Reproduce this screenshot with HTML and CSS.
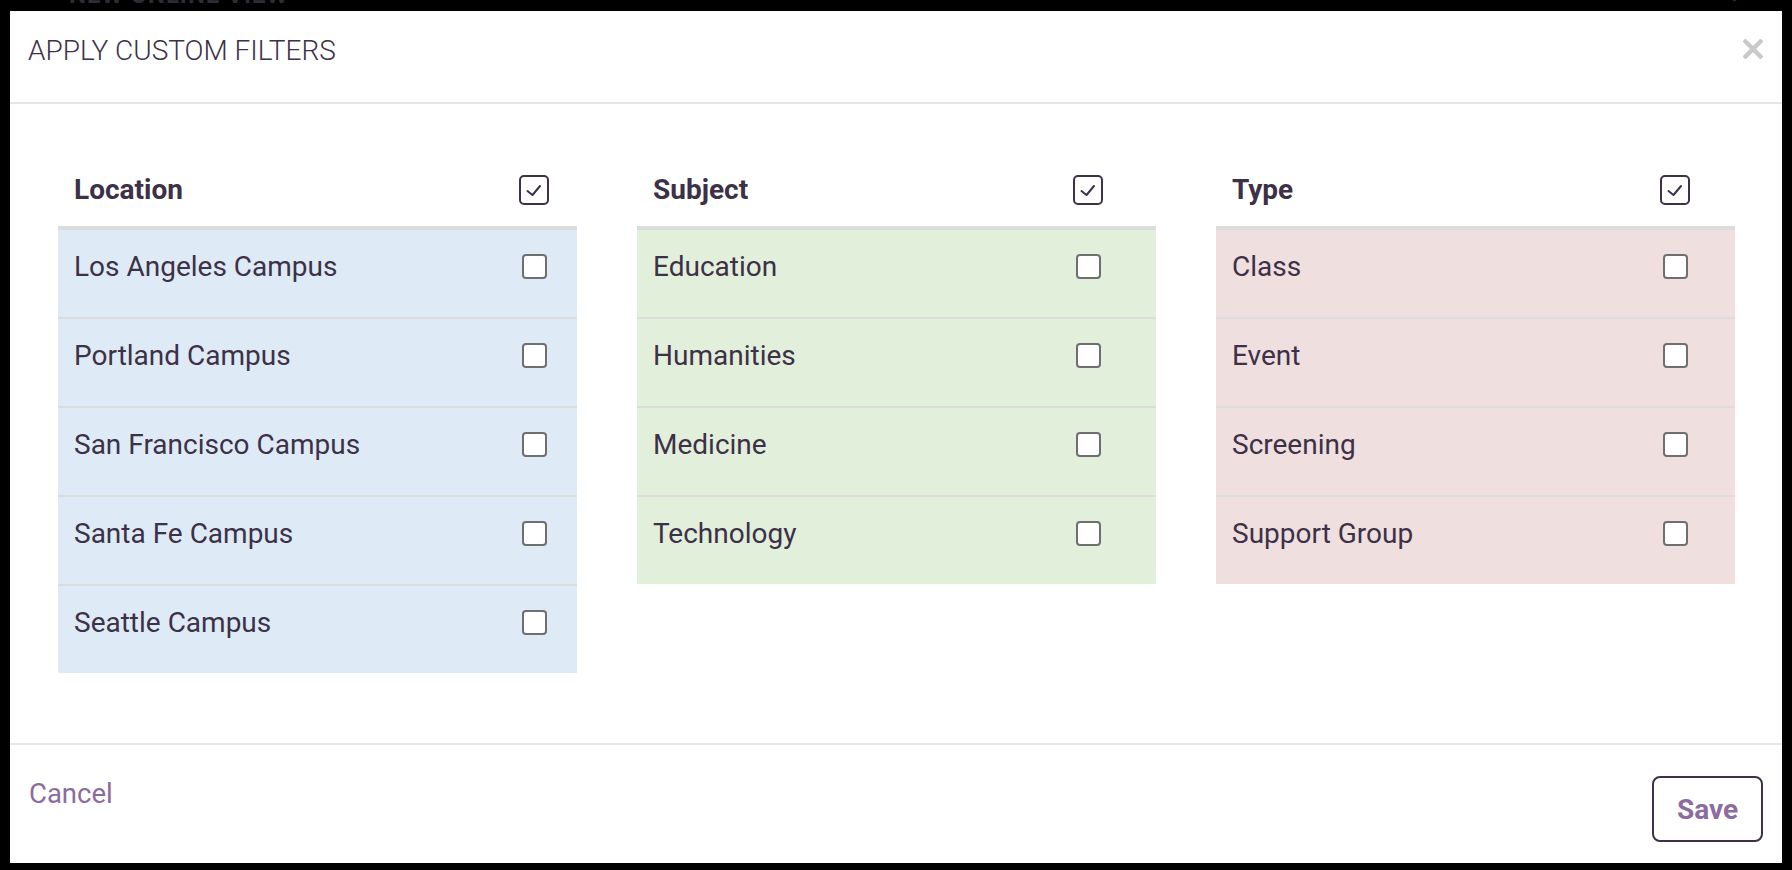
FILE: index.html
```
<!DOCTYPE html>
<html lang="en">
<head>
<meta charset="utf-8">
<title>Apply Custom Filters</title>
<link rel="stylesheet" href="styles.css">
</head>
<body>
<div class="behind">
  <span class="behind-text">NEW ONLINE VIEW</span>
  <span class="behind-text behind-right">+</span>
</div>
<div class="modal">
  <header class="modal-head">
    <h2 class="modal-title">APPLY CUSTOM FILTERS</h2>
    <button class="close" type="button" aria-label="Close">
      <svg width="20" height="20" viewBox="0 0 20 20"><path d="M2.5 2.5 L17.5 17.5 M17.5 2.5 L2.5 17.5" stroke="#c9c9c9" stroke-width="4.4" stroke-linecap="square" fill="none"/></svg>
    </button>
  </header>
  <div class="modal-body">
    <section class="col col-location">
      <div class="col-head"><span class="col-title">Location</span><span class="cb cb-head"><svg width="26" height="26" viewBox="0 0 26 26"><path d="M6.5 14 L11.5 18 L19 9" stroke="#3d3148" stroke-width="2" fill="none" stroke-linecap="round" stroke-linejoin="round"/></svg></span></div>
      <ul class="list">
        <li class="row"><span class="row-label">Los Angeles Campus</span><span class="cb"></span></li>
        <li class="row"><span class="row-label">Portland Campus</span><span class="cb"></span></li>
        <li class="row"><span class="row-label">San Francisco Campus</span><span class="cb"></span></li>
        <li class="row"><span class="row-label">Santa Fe Campus</span><span class="cb"></span></li>
        <li class="row"><span class="row-label">Seattle Campus</span><span class="cb"></span></li>
      </ul>
    </section>
    <section class="col col-subject">
      <div class="col-head"><span class="col-title">Subject</span><span class="cb cb-head"><svg width="26" height="26" viewBox="0 0 26 26"><path d="M6.5 14 L11.5 18 L19 9" stroke="#3d3148" stroke-width="2" fill="none" stroke-linecap="round" stroke-linejoin="round"/></svg></span></div>
      <ul class="list">
        <li class="row"><span class="row-label">Education</span><span class="cb"></span></li>
        <li class="row"><span class="row-label">Humanities</span><span class="cb"></span></li>
        <li class="row"><span class="row-label">Medicine</span><span class="cb"></span></li>
        <li class="row"><span class="row-label">Technology</span><span class="cb"></span></li>
      </ul>
    </section>
    <section class="col col-type">
      <div class="col-head"><span class="col-title">Type</span><span class="cb cb-head"><svg width="26" height="26" viewBox="0 0 26 26"><path d="M6.5 14 L11.5 18 L19 9" stroke="#3d3148" stroke-width="2" fill="none" stroke-linecap="round" stroke-linejoin="round"/></svg></span></div>
      <ul class="list">
        <li class="row"><span class="row-label">Class</span><span class="cb"></span></li>
        <li class="row"><span class="row-label">Event</span><span class="cb"></span></li>
        <li class="row"><span class="row-label">Screening</span><span class="cb"></span></li>
        <li class="row"><span class="row-label">Support Group</span><span class="cb"></span></li>
      </ul>
    </section>
  </div>
  <footer class="modal-foot">
    <a class="cancel" href="#">Cancel</a>
    <button class="save" type="button">Save</button>
  </footer>
</div>
</body>
</html>
```
FILE: styles.css
```
* { box-sizing: border-box; }
html, body { margin: 0; padding: 0; }
body {
  background: #000;
  font-family: Roboto, "Liberation Sans", Arial, sans-serif;
  color: #3d3148;
  height: 870px;
  overflow: hidden;
}
.behind {
  height: 11px;
  overflow: hidden;
  display: flex;
  justify-content: space-between;
  padding: 0 50px 0 69px;
}
.behind-text {
  font-size: 24px;
  line-height: 24px;
  font-weight: 700;
  color: #2e2c36;
  margin-top: -17px;
  letter-spacing: 1px;
}
.modal {
  margin: 0 10px;
  height: 852px;
  background: #fff;
  display: flex;
  flex-direction: column;
}
.modal-head {
  height: 93px;
  border-bottom: 2px solid #e6e6e6;
  display: flex;
  align-items: flex-start;
  justify-content: space-between;
  padding: 24px 19px 0 18px;
}
.modal-title {
  margin: 0;
  font-size: 28px;
  line-height: 32px;
  font-weight: 300;
  color: #3d3148;
}
.close {
  border: 0;
  background: none;
  padding: 0;
  margin-top: 4px;
  width: 20px;
  height: 20px;
  display: block;
  cursor: pointer;
}
.close svg { display: block; }
.modal-body {
  padding: 56px 47px 70px 48px;
  display: grid;
  grid-template-columns: repeat(3, 1fr);
  column-gap: 60px;
  align-items: start;
}
.col-head {
  height: 66px;
  padding: 0 28px 7px 16px;
  display: flex;
  align-items: center;
  justify-content: space-between;
}
.col-title {
  font-size: 28px;
  font-weight: 700;
  line-height: 42px;
}
.list {
  list-style: none;
  margin: 0;
  padding: 0;
  border-top: 4px solid #dcdcdc;
}
.col-location .list { background: #deebf6; }
.col-subject .list { background: #e2efdb; }
.col-type .list { background: #efdfdf; }
.row {
  height: 89px;
  border-bottom: 2px solid #dcdcdc;
  display: flex;
  align-items: flex-start;
  justify-content: space-between;
  padding: 16px 30px 0 16px;
}
.row:last-child {
  border-bottom: 0;
  height: 87px;
}
.col-subject .row { padding-right: 55px; }
.col-subject .col-head { padding-right: 53px; }
.col-type .row { padding-right: 47px; }
.col-type .col-head { padding-right: 45px; }
.row-label {
  font-size: 28px;
  line-height: 42px;
  font-weight: 400;
}
.cb {
  width: 25px;
  height: 25px;
  border: 2px solid #6f6f6f;
  border-radius: 4px;
  background: #fff;
  margin-top: 8px;
  flex: none;
}
.cb-head {
  width: 30px;
  height: 30px;
  border-color: #3d3148;
  border-radius: 5px;
  margin-top: 0;
  display: flex;
  align-items: center;
  justify-content: center;
}
.cb-head svg { display: block; }
.modal-foot {
  margin-top: auto;
  height: 120px;
  border-top: 2px solid #e6e6e6;
  display: flex;
  align-items: flex-start;
  justify-content: space-between;
  padding: 28px 19px 21px 19px;
}
.cancel {
  font-size: 27.5px;
  line-height: 42px;
  color: #8c6b9f;
  text-decoration: none;
}
.save {
  margin-top: 3px;
  width: 111px;
  height: 66px;
  border: 2px solid #3d3148;
  border-radius: 8px;
  background: #fff;
  font-family: Roboto, "Liberation Sans", Arial, sans-serif;
  font-size: 28px;
  font-weight: 700;
  color: #8c6b9f;
  padding: 0;
  cursor: pointer;
}
```
